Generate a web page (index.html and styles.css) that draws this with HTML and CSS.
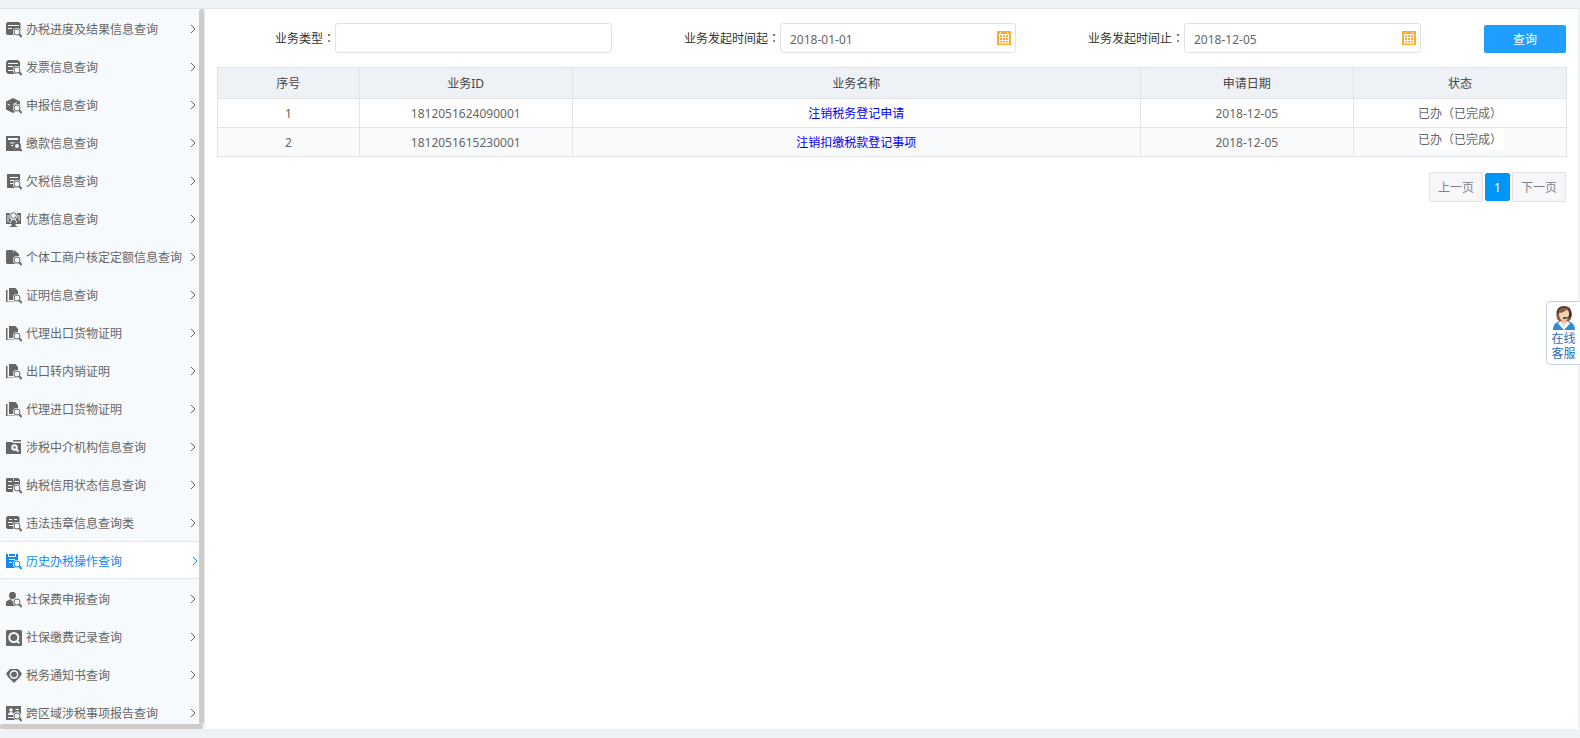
FILE: index.html
```html
<!DOCTYPE html>
<html lang="zh-CN">
<head>
  <meta charset="UTF-8" />
  <meta name="viewport" content="width=device-width, initial-scale=1" />
  <title>历史办税操作查询</title>
  <link rel="stylesheet" href="styles.css">
</head>
<body>

  <!-- 图标 -->
  <svg class="sprite" aria-hidden="true">
    <symbol id="lens" viewBox="0 0 16 16">
      <circle class="cut-fill" cx="11" cy="10" r="4" />
      <circle class="line" cx="11" cy="10" r="3" />
      <path class="line thick" d="M13.200 12.400L15.700 15" />
    </symbol>
    <symbol id="i-progress" viewBox="0 0 16 16">
      <path d="M1.500 0h11.500l1.500 1.500V13H1.500L0 11.500V1.500z" />
      <path class="cut" d="M2 3.500h11M2 6.500h4" />
      <use href="#lens" />
    </symbol>
    <symbol id="i-invoice" viewBox="0 0 16 16">
      <path d="M2 0h10l2 2v12H2l-2-2V2z" />
      <path class="cut" d="M2 3.500h10M2 6.500h5M2 10.500h5" />
      <use href="#lens" />
    </symbol>
    <symbol id="i-declare" viewBox="0 0 16 16">
      <path d="M7 0l7 3.500v8L7 15 0 11.500v-8z" />
      <path class="cut" d="M1.500 6l2.500 1.300M7 6.500l4-2" />
      <use href="#lens" />
    </symbol>
    <symbol id="i-pay" viewBox="0 0 16 16">
      <path d="M0 0h14v15H0z" />
      <path class="cut-fill" d="M2 2h10v2H2zM4 6.500h5v1H4zM5 9h2v1H5z" />
      <use href="#lens" />
      <circle class="line thick" cx="11" cy="10" r="3" />
    </symbol>
    <symbol id="i-owe" viewBox="0 0 16 16">
      <path d="M1 0h13v14H1z" />
      <path class="cut" d="M4 3.500h8M4 6.500h4M4 9.500h3" />
      <use href="#lens" />
    </symbol>
    <symbol id="i-benefit" viewBox="0 0 16 16">
      <path d="M0 1h15v11H9.500v2H11v1H4v-1h1.500v-2H0z" />
      <path class="cut" d="M2 3v7M13 3v6M4 11l1.500-3M11 11L9.500 8" />
      <circle class="cut-fill" cx="7.500" cy="4" r="4" />
      <circle class="line" cx="7.500" cy="3.500" r="2.800" />
      <path class="line" d="M9.500 5.500l3.500 4" />
    </symbol>
    <symbol id="i-quota" viewBox="0 0 16 16">
      <path d="M1 0h6v3l1-3 5 4v10H1L0 13V1z" />
      <use href="#lens" />
    </symbol>
    <symbol id="i-cert" viewBox="0 0 16 16">
      <path d="M3 0h6.500L12 3v9H3zM0 2h1.500v11.500H10V14H0z" />
      <use href="#lens" />
    </symbol>
    <symbol id="i-agency" viewBox="0 0 16 16">
      <path d="M0 2h6l1 1h8v11H0zM7 0h8v1.500H7z" />
      <circle class="cut wide" cx="8.500" cy="7.500" r="2.200" />
      <path class="cut wide" d="M10 9l2.500 2.500" />
    </symbol>
    <symbol id="i-credit" viewBox="0 0 16 16">
      <path d="M1 0h6v14H1L0 13V1zM8 0h4l2 2v8H7V4z" />
      <path class="cut" d="M2 3.500h4M8.500 3.500H13M2 7.500h4M2 10.500h4" />
      <use href="#lens" />
    </symbol>
    <symbol id="i-illegal" viewBox="0 0 16 16">
      <path d="M1.500 0H12l1.500 1.500V13h-12L0 11.500v-10z" />
      <path class="cut" d="M3 3.500h3M8 3.500h3M2 6.500h5M3 9.500h4" />
      <use href="#lens" />
    </symbol>
    <symbol id="i-history" viewBox="0 0 16 16">
      <path d="M0 0h12v14H0z" />
      <path class="cut" d="M2.500 0v2.500h7V0M3 5.500h6M3 8.500h3" />
      <use href="#lens" />
    </symbol>
    <symbol id="i-person" viewBox="0 0 16 16">
      <ellipse cx="6.500" cy="3.500" rx="3.500" ry="3.700" />
      <path d="M0 14v-4.500L4.500 7 6.500 9.500 8.500 7l4.500 2.500V14z" />
      <use href="#lens" />
    </symbol>
    <symbol id="i-record" viewBox="0 0 16 16">
      <rect width="16" height="16" rx="1.500" />
      <circle class="cut wide" cx="7.800" cy="7.500" r="4.500" />
      <path class="cut wide" d="M10.500 10.500l2.800 2.800" />
    </symbol>
    <symbol id="i-notice" viewBox="0 0 16 16">
      <path d="M4 1h8l4 4.500-2 3.500-6 6-6-6-2-3.500z" />
      <circle class="cut" cx="8" cy="6.500" r="4" />
      <circle class="cut" cx="8" cy="6.500" r="3.500" />
    </symbol>
    <symbol id="i-region" viewBox="0 0 16 16">
      <path d="M0 0h15v14H0z" />
      <circle class="cut-fill" cx="5" cy="4" r="1.800" />
      <path class="cut-fill" d="M2 9c0-4 6-4 6 0zM9.500 3H13v1H9.500zM9.500 5.500H13v1H9.500zM2 11h5v1H2z" />
      <use href="#lens" />
    </symbol>
    <symbol id="i-calendar" viewBox="0 0 14 14">
      <path d="M0 0h14v14H0z" />
      <path class="grid-lines" d="M2 3.500h10M2.500 3v9.500M5.500 3v9.500M8.500 3v9.500M11.500 3v9.500M2 6.500h10M2 9.500h10M2 12h10M3.500 1v1M10.500 1v1" />
    </symbol>
    <symbol id="arrow" viewBox="0 0 6 10">
      <path class="line" d="M1 1l4 4-4 4" />
    </symbol>
  </svg>

  <div class="layout">
    <aside class="sidebar">
      <nav class="menu-wrap" aria-label="信息查询">
        <ul class="menu">
          <li><a href="#"><svg class="icon"><use href="#i-progress" /></svg><span>办税进度及结果信息查询</span><svg class="arrow"><use href="#arrow" /></svg></a></li>
          <li><a href="#"><svg class="icon"><use href="#i-invoice" /></svg><span>发票信息查询</span><svg class="arrow"><use href="#arrow" /></svg></a></li>
          <li><a href="#"><svg class="icon"><use href="#i-declare" /></svg><span>申报信息查询</span><svg class="arrow"><use href="#arrow" /></svg></a></li>
          <li><a href="#"><svg class="icon"><use href="#i-pay" /></svg><span>缴款信息查询</span><svg class="arrow"><use href="#arrow" /></svg></a></li>
          <li><a href="#"><svg class="icon"><use href="#i-owe" /></svg><span>欠税信息查询</span><svg class="arrow"><use href="#arrow" /></svg></a></li>
          <li><a href="#"><svg class="icon"><use href="#i-benefit" /></svg><span>优惠信息查询</span><svg class="arrow"><use href="#arrow" /></svg></a></li>
          <li><a href="#"><svg class="icon"><use href="#i-quota" /></svg><span>个体工商户核定定额信息查询</span><svg class="arrow"><use href="#arrow" /></svg></a></li>
          <li><a href="#"><svg class="icon"><use href="#i-cert" /></svg><span>证明信息查询</span><svg class="arrow"><use href="#arrow" /></svg></a></li>
          <li><a href="#"><svg class="icon"><use href="#i-cert" /></svg><span>代理出口货物证明</span><svg class="arrow"><use href="#arrow" /></svg></a></li>
          <li><a href="#"><svg class="icon"><use href="#i-cert" /></svg><span>出口转内销证明</span><svg class="arrow"><use href="#arrow" /></svg></a></li>
          <li><a href="#"><svg class="icon"><use href="#i-cert" /></svg><span>代理进口货物证明</span><svg class="arrow"><use href="#arrow" /></svg></a></li>
          <li><a href="#"><svg class="icon"><use href="#i-agency" /></svg><span>涉税中介机构信息查询</span><svg class="arrow"><use href="#arrow" /></svg></a></li>
          <li><a href="#"><svg class="icon"><use href="#i-credit" /></svg><span>纳税信用状态信息查询</span><svg class="arrow"><use href="#arrow" /></svg></a></li>
          <li><a href="#"><svg class="icon"><use href="#i-illegal" /></svg><span>违法违章信息查询类</span><svg class="arrow"><use href="#arrow" /></svg></a></li>
          <li class="active"><a href="#" aria-current="page"><svg class="icon"><use href="#i-history" /></svg><span>历史办税操作查询</span><svg class="arrow"><use href="#arrow" /></svg></a></li>
          <li><a href="#"><svg class="icon"><use href="#i-person" /></svg><span>社保费申报查询</span><svg class="arrow"><use href="#arrow" /></svg></a></li>
          <li><a href="#"><svg class="icon"><use href="#i-record" /></svg><span>社保缴费记录查询</span><svg class="arrow"><use href="#arrow" /></svg></a></li>
          <li><a href="#"><svg class="icon"><use href="#i-notice" /></svg><span>税务通知书查询</span><svg class="arrow"><use href="#arrow" /></svg></a></li>
          <li><a href="#"><svg class="icon"><use href="#i-region" /></svg><span>跨区域涉税事项报告查询</span><svg class="arrow"><use href="#arrow" /></svg></a></li>
        </ul>
      </nav>
      <div class="scroll-y"></div>
      <div class="scroll-x"></div>
    </aside>

    <main class="content">
      <form class="search" autocomplete="off">
        <label for="bizType">业务类型<span class="colon" lang="zh-TW">：</span></label>
        <input type="text" id="bizType" name="bizType" />

        <label for="dateStart">业务发起时间起<span class="colon" lang="zh-TW">：</span></label>
        <div class="date-field">
          <input type="text" id="dateStart" name="dateStart" value="2018-01-01" />
          <svg class="calendar"><use href="#i-calendar" /></svg>
        </div>

        <label for="dateEnd">业务发起时间止<span class="colon" lang="zh-TW">：</span></label>
        <div class="date-field">
          <input type="text" id="dateEnd" name="dateEnd" value="2018-12-05" />
          <svg class="calendar"><use href="#i-calendar" /></svg>
        </div>

        <button type="submit" class="search-btn">查询</button>
      </form>

      <table class="result" aria-label="业务列表">
        <colgroup>
          <col class="col-no" />
          <col class="col-id" />
          <col class="col-name" />
          <col class="col-date" />
          <col class="col-status" />
        </colgroup>
        <thead>
          <tr>
            <th>序号</th>
            <th>业务ID</th>
            <th>业务名称</th>
            <th>申请日期</th>
            <th>状态</th>
          </tr>
        </thead>
        <tbody>
          <tr>
            <td>1</td>
            <td>1812051624090001</td>
            <td><a href="#">注销税务登记申请</a></td>
            <td>2018-12-05</td>
            <td>已办（已完成）</td>
          </tr>
          <tr>
            <td>2</td>
            <td>1812051615230001</td>
            <td><a href="#">注销扣缴税款登记事项</a></td>
            <td>2018-12-05</td>
            <td class="status-top"><span class="status">已办（已完成）</span></td>
          </tr>
        </tbody>
      </table>

      <div class="pager">
        <button type="button">上一页</button>
        <button type="button" class="current">1</button>
        <button type="button">下一页</button>
      </div>
    </main>
  </div>

  <a class="service" href="#">
    <svg class="avatar" viewBox="0 0 22 24" aria-hidden="true">
      <path fill="#8a5a40" d="M4 13C2 4 5 0 11 0s9 4 7 13l-3 3H7z" />
      <path fill="#f8d3b2" d="M6 7c3 0 6-1.500 7.500-3.500 1 1.500 2.500 2 2.500 4 0 4-2 7.500-5 7.500S6 11.500 6 7z" />
      <path fill="#f0bd98" d="M8.500 13h5v4L11 20l-2.500-3z" />
      <path fill="#2e8fd8" d="M0 24c0-6 3-7.500 7-9l4 5 4-5c4 1.500 7 3 7 9z" />
      <path fill="#fff" d="M7.500 15L5 17.500 11 24l6-6.500-2.500-2.500-3.500 5z" />
      <path fill="#f8d3b2" d="M8.500 16l2.500 4.500 2.500-4.500z" />
      <path fill="none" stroke="#333" stroke-width="1.200" d="M4.500 8C4 3 7 1 11 1s7 2 6.500 7c0 3-2 4-5.500 4" />
      <path fill="#333" d="M16 6.500h2.500v4H16zM10 11.300h3v1.500h-3z" />
    </svg>
    <span>在线</span>
    <span>客服</span>
  </a>

</body>
</html>
```
FILE: styles.css
```css
* {
  box-sizing: border-box;
}
body {
  margin: 0;
  background: #eef2f5;
  color: #666;
  font-family: "Noto Sans", "Noto Sans CJK SC", sans-serif;
  font-size: 12px;
  line-height: 18px;
}
a {
  text-decoration: none;
}
input, button {
  font-family: inherit;
  font-size: 12px;
}
.sprite {
  position: absolute;
  width: 0;
  height: 0;
}
.line {
  fill: none;
  stroke: currentColor;
  stroke-width: 1;
}
.cut {
  fill: none;
  stroke: var(--item-bg);
  stroke-width: 1;
}
.thick, .wide {
  stroke-width: 2;
}
.cut-fill {
  fill: var(--item-bg);
}
.layout {
  display: flex;
  height: 100vh;
  padding: 8px 2px 9px 0;
}

/* 左侧菜单 */
.sidebar {
  display: grid;
  grid-template-columns: 1fr 5px;
  grid-template-rows: minmax(0, 1fr) 5px;
  flex: 0 0 205px;
  border-top: 1px solid #e2e5e8;
  border-right: 1px solid #e6e6e6;
  background: #f6fafd;
}
.menu-wrap {
  overflow: hidden;
}
.menu {
  margin: 0;
  padding: 0;
  list-style: none;
  --item-bg: #f6fafd;
}
.menu a {
  display: flex;
  align-items: center;
  height: 38px;
  padding: 4px 3px 0 6px;
  color: #666;
  white-space: nowrap;
}
.menu .active a {
  --item-bg: #fff;
  padding: 4px 1px 0 6px;
  border-top: 1px solid #e2e5e8;
  border-bottom: 1px solid #e2e5e8;
  background: #fff;
  color: #0d8bf2;
}
.icon {
  width: 16px;
  height: 16px;
  margin-right: 4px;
  fill: currentColor;
}
.arrow {
  width: 6px;
  height: 10px;
  margin-bottom: 2px;
  margin-left: auto;
}
.scroll-y {
  border-radius: 3px;
  background: #ccc;
}
.scroll-x {
  grid-column: 1 / 3;
  margin-right: 1px;
  border-radius: 3px;
  background: #ccc;
}

/* 右侧内容 */
.content {
  flex: 1;
  min-width: 0;
  padding: 14px 11px 0 12px;
  border-top: 1px solid #e2e5e8;
  background: #fff;
}
.search {
  display: grid;
  grid-template-columns: 118fr 277fr 168fr 236fr 168fr 237fr 146fr;
  align-items: center;
  margin-bottom: 14px;
}
.search label {
  color: #333;
  text-align: right;
  white-space: nowrap;
}
.colon {
  font-family: "Noto Sans CJK TC", sans-serif;
}
.search input {
  display: block;
  width: 100%;
  height: 30px;
  padding: 2px 9px 0;
  border: 1px solid #e2e2e2;
  border-radius: 3px;
  background: #fff;
  color: #666;
}
.date-field {
  position: relative;
}
.calendar {
  position: absolute;
  top: 8px;
  right: 5px;
  width: 14px;
  height: 14px;
  fill: #ffab2e;
  pointer-events: none;
}
.grid-lines {
  fill: none;
  stroke: #fff;
  stroke-width: 1;
}
.search-btn {
  justify-self: end;
  align-self: end;
  width: 82px;
  height: 28px;
  margin-right: 1px;
  border: none;
  border-radius: 2px;
  background: #1e9fff;
  color: #fff;
  cursor: pointer;
}
.result {
  width: 100%;
  border-collapse: collapse;
  table-layout: fixed;
}
.col-no {
  width: 10.5%;
}
.col-id, .col-date, .col-status {
  width: 15.8%;
}
.result th, .result td {
  height: 29px;
  padding: 2px 0 0;
  border: 1px solid #e2e5e8;
  text-align: center;
}
.result th {
  height: 31px;
  background: #eef2f6;
  color: #444;
  font-weight: 400;
}
.result tbody tr:nth-child(even) {
  background: #f8fafc;
}
.result a {
  color: #00f;
}
.result .status-top {
  padding-top: 1px;
  vertical-align: top;
}
.status {
  display: inline-block;
  padding: 2px 2px 1px;
  background: #fff;
}
.pager {
  display: flex;
  justify-content: flex-end;
  align-items: center;
  gap: 2px;
  margin: 15px 1px 0 0;
}
.pager button {
  height: 30px;
  padding: 0 8px;
  border: 1px solid #e2e2e6;
  border-radius: 2px;
  background: #f7f7fa;
  color: #7c838f;
  cursor: pointer;
}
.pager .current {
  height: 28px;
  border-color: #0096f8;
  background: #0096f8;
  color: #fff;
}

/* 在线客服 */
.service {
  position: fixed;
  top: 301px;
  right: 0;
  display: flex;
  flex-direction: column;
  align-items: center;
  width: 34px;
  padding: 4px 0 3px;
  border: 1px solid #c5d2e2;
  border-right: none;
  border-radius: 5px 0 0 5px;
  background: #fff;
  color: #2b6cb5;
  line-height: 15px;
}
.avatar {
  width: 22px;
  height: 24px;
  margin-bottom: 1px;
}
```
